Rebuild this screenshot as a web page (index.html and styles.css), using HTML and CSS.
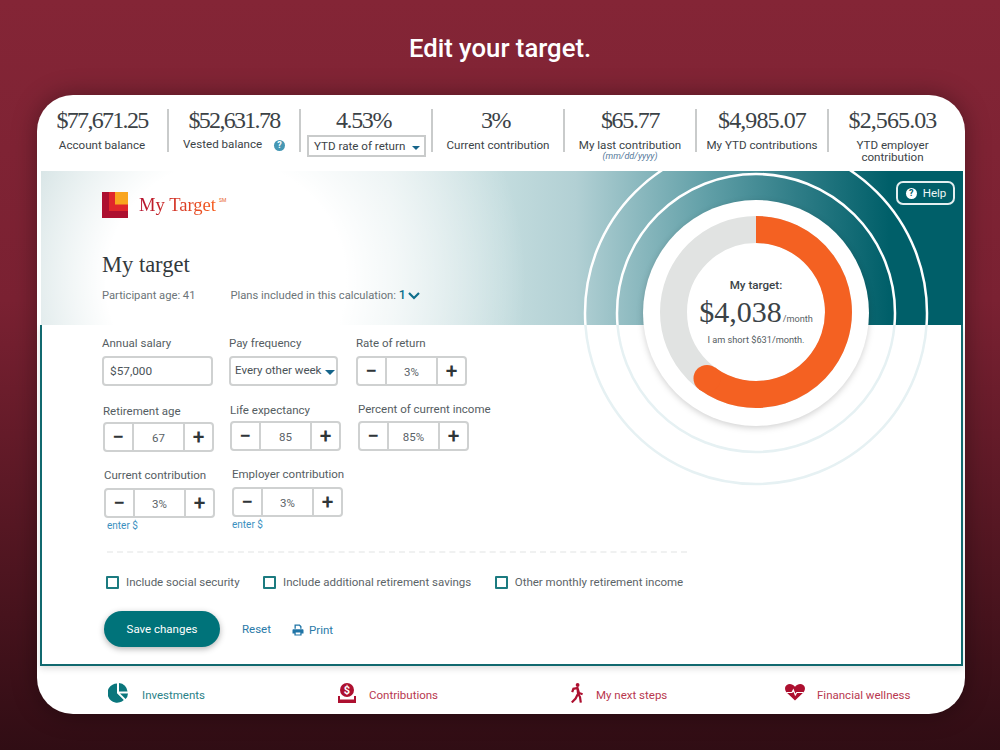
FILE: index.html
```html
<!DOCTYPE html>
<html>
<head>
    <meta charset="utf-8">
    <title>Edit your target</title>
    <link rel="stylesheet" href="styles.css">
</head>
<body>
    <h1 class="page-title">Edit your target.</h1>
    <div class="card">
        <div class="stats">
            <div class="stat">
                <div class="stat__value stat__value--tight">$77,671.25</div>
                <div class="stat__label">Account balance</div>
            </div>
            <div class="stat">
                <div class="stat__value stat__value--tight">$52,631.78</div>
                <div class="stat__label stat__label--help">Vested balance <span class="hint">?</span></div>
            </div>
            <div class="stat">
                <div class="stat__value stat__value--shift">4.53%</div>
                <div class="stat__select">YTD rate of return <span class="caret"></span></div>
            </div>
            <div class="stat">
                <div class="stat__value stat__value--shift">3%</div>
                <div class="stat__label">Current contribution</div>
            </div>
            <div class="stat">
                <div class="stat__value">$65.77</div>
                <div class="stat__label">My last contribution</div>
                <div class="stat__date">(mm/dd/yyyy)</div>
            </div>
            <div class="stat">
                <div class="stat__value stat__value--wide">$4,985.07</div>
                <div class="stat__label">My YTD contributions</div>
            </div>
            <div class="stat stat--last">
                <div class="stat__value stat__value--wide">$2,565.03</div>
                <div class="stat__label">YTD employer<br>contribution</div>
            </div>
        </div>

        <div class="main">
            <div class="hero">
                <div class="logo">
                    <svg class="logo__mark" viewBox="0 0 26 26" width="26" height="26">
                        <rect width="26" height="26" fill="#ad1030"/>
                        <rect x="7" width="19" height="19" fill="#e0262b"/>
                        <rect x="13" width="13" height="12.5" fill="#f9a51f"/>
                    </svg>
                    <span class="logo__name">My Target</span><span class="logo__sm">SM</span>
                </div>
                <h2 class="hero__title">My target</h2>
                <div class="hero__meta">
                    <span class="hero__age">Participant age: 41</span>
                    <span>Plans included in this calculation: <b class="hero__count">1</b></span>
                    <svg class="chevron" viewBox="0 0 14 9" width="14" height="9"><polyline points="2,2 7,7 12,2" fill="none" stroke="#0f6f8c" stroke-width="2.2"/></svg>
                </div>
                <div class="help"><span class="help__icon">?</span>Help</div>
            </div>

            <div class="form">
                <div class="form-row">
                    <div class="field">
                        <label class="field__label">Annual salary</label>
                        <div class="text-input">$57,000</div>
                    </div>
                    <div class="field field--select">
                        <label class="field__label">Pay frequency</label>
                        <div class="select">Every other week <span class="caret caret--big"></span></div>
                    </div>
                    <div class="field field--rate">
                        <label class="field__label">Rate of return</label>
                        <div class="stepper"><span class="stepper__btn">−</span><span class="stepper__val">3%</span><span class="stepper__btn">+</span></div>
                    </div>
                </div>
                <div class="form-row form-row--two">
                    <div class="field">
                        <label class="field__label field__label--low">Retirement age</label>
                        <div class="stepper"><span class="stepper__btn">−</span><span class="stepper__val">67</span><span class="stepper__btn">+</span></div>
                    </div>
                    <div class="field">
                        <label class="field__label">Life expectancy</label>
                        <div class="stepper"><span class="stepper__btn">−</span><span class="stepper__val">85</span><span class="stepper__btn">+</span></div>
                    </div>
                    <div class="field field--percent">
                        <label class="field__label field__label--high">Percent of current income</label>
                        <div class="stepper"><span class="stepper__btn">−</span><span class="stepper__val">85%</span><span class="stepper__btn">+</span></div>
                    </div>
                </div>
                <div class="form-row form-row--three">
                    <div class="field">
                        <label class="field__label">Current contribution</label>
                        <div class="stepper"><span class="stepper__btn">−</span><span class="stepper__val">3%</span><span class="stepper__btn">+</span></div>
                        <a class="enter enter--in">enter $</a>
                    </div>
                    <div class="field field--employer">
                        <label class="field__label">Employer contribution</label>
                        <div class="stepper"><span class="stepper__btn">−</span><span class="stepper__val">3%</span><span class="stepper__btn">+</span></div>
                        <a class="enter">enter $</a>
                    </div>
                </div>

                <div class="divider"></div>

                <div class="checks">
                    <label class="check"><span class="check__box"></span>Include social security</label>
                    <label class="check"><span class="check__box"></span>Include additional retirement savings</label>
                    <label class="check"><span class="check__box"></span>Other monthly retirement income</label>
                </div>

                <div class="actions">
                    <button class="save">Save changes</button>
                    <a class="action-link">Reset</a>
                    <a class="action-link action-link--print">
                        <svg viewBox="0 0 12 12" width="12" height="12"><path d="M2.5 0.5h5.2l1.8 1.8v2.4h-1.3V2.9L7.2 1.8H3.8v2.9H2.5zM1.5 5.2h9c.6 0 1 .4 1 1v3.3H9.6v2H2.4v-2H.5V6.2c0-.6.4-1 1-1zM3.7 8.4v2h4.6v-2z" fill="#1f74a6"/></svg>
                        Print
                    </a>
                </div>
            </div>

            <!-- rings and gauge lie over both the hero and the form -->
            <svg class="gauge" width="922" height="340" viewBox="0 0 922 340">
                <defs>
                    <clipPath id="topClip"><rect width="922" height="154"/></clipPath>
                    <clipPath id="bottomClip"><rect y="154" width="922" height="186"/></clipPath>
                </defs>
                <g clip-path="url(#bottomClip)" fill="none" stroke="#e6f1f3" stroke-width="2.5">
                    <circle cx="715" cy="142" r="139"/>
                    <circle cx="715" cy="142" r="171"/>
                </g>
                <g clip-path="url(#topClip)" fill="none" stroke="#fff" stroke-width="2.5">
                    <circle cx="715" cy="142" r="139"/>
                    <circle cx="715" cy="142" r="171"/>
                </g>
                <circle class="gauge__disc" cx="715" cy="142" r="113"/>
                <circle cx="715" cy="141" r="82.5" fill="none" stroke="#e1e3e2" stroke-width="27"/>
                <path d="M715 58.5 A82.5 82.5 0 1 1 666 207.4" fill="none" stroke="#f46122" stroke-width="27"/>
                <circle cx="666" cy="207.4" r="13.5" fill="#f46122"/>
            </svg>
            <div class="gauge-text">
                <div class="gauge-text__label">My target:</div>
                <div class="gauge-text__amount">$4,038<small>/month</small></div>
                <div class="gauge-text__note">I am short $631/month.</div>
            </div>
        </div>

        <div class="footer">
            <a class="nav nav--teal">
                <svg viewBox="0 0 20 20" width="20" height="20" fill="#0a767c">
                    <path d="M9 .5A9.6 9.6 0 1 0 15.8 17L9 10.2z"/>
                    <path d="M11 0A9 9 0 0 1 19.5 8.6H11z"/>
                    <path d="M12 10.5h8a9 9 0 0 1-2.4 5.6z"/>
                </svg>
                Investments
            </a>
            <a class="nav">
                <svg viewBox="0 0 20 20" width="20" height="20">
                    <circle cx="10" cy="7" r="7" fill="#ad1030"/>
                    <text x="10" y="10.8" class="nav__dollar">$</text>
                    <path d="M1 13h2v3.6h14V13h2v7H1z" fill="#ad1030"/>
                </svg>
                Contributions
            </a>
            <a class="nav">
                <svg viewBox="0 0 14 20" width="14" height="20">
                    <circle cx="7.6" cy="2" r="1.9" fill="#ad1030"/>
                    <path d="M2.2 9.2L3.4 5.8 7.5 5 9 10 12.6 11.2M7.5 5L8 10.5 10 14 10.8 19.6M7.6 11.5L5.6 15.5 1.8 19.4" fill="none" stroke="#ad1030" stroke-width="2.2"/>
                </svg>
                My next steps
            </a>
            <a class="nav">
                <svg viewBox="0 0 20 17" width="20" height="17">
                    <path d="M10 16.6L1.6 8.4C-.6 6-.4 2.6 1.8 1 4.2-.7 7.6-.1 10 2.8 12.4-.1 15.8-.7 18.2 1c2.2 1.6 2.4 5 .2 7.4z" fill="#ad1030"/>
                    <polyline points="1.5,8.5 7,8.5 8.3,6 10.3,11 11.8,8.5 18.5,8.5" fill="none" stroke="#fff" stroke-width="1.2"/>
                </svg>
                Financial wellness
            </a>
        </div>
    </div>
</body>
</html>
```

FILE: styles.css
```css
* {
	box-sizing: border-box;
}

body {
	margin: 0;
	width: 1000px;
	height: 750px;
	overflow: hidden;
	background: linear-gradient(to bottom, #842536 0%, #7a2132 40%, #561723 70%, #300d14 100%);
	font-family: Roboto, "Liberation Sans", sans-serif;
	font-size: 11.6px;
	color: #4a5257;
}

.page-title {
	margin: 0;
	height: 95px;
	padding-top: 33px;
	text-align: center;
	font-size: 25.7px;
	line-height: 30px;
	font-weight: 500;
	color: #fff;
}

.card {
	width: 928px;
	height: 619px;
	margin-left: 37px;
	background: #fff;
	border-radius: 36px;
	box-shadow: 0 0 24px rgba(0,0,0,0.35);
	overflow: hidden;
}

/* top stats */
.stats {
	display: flex;
	height: 76px;
	padding-top: 14px;
}
.stat {
	width: 132px;
	height: 43px;
	border-right: 2px solid #c9cbcb;
	text-align: center;
	color: #3b4347;
}
.stat--last {
	width: 127px;
	border-right: 0;
}
.stat__value {
	margin-top: -1px;
	margin-bottom: 1px;
	font-family: "Liberation Serif", serif;
	font-size: 24px;
	line-height: 24px;
	letter-spacing: -1.3px;
	color: #3b4246;
}
.stat__value--tight {
	letter-spacing: -1.7px;
}
.stat__value--wide {
	letter-spacing: -0.9px;
}
.stat__value--shift {
	letter-spacing: -1.4px;
	padding-right: 5px;
}
.stat__label {
	margin-top: 7px;
	line-height: 12px;
}
.stat__label--help {
	margin-top: 6px;
}
.stat__date {
	font-size: 9px;
	line-height: 11px;
	font-style: italic;
	color: #55789a;
}
.hint {
	display: inline-block;
	width: 11px;
	height: 11px;
	margin-left: 9px;
	border-radius: 50%;
	background: #4597b4;
	color: #fff;
	font-size: 9px;
	line-height: 11px;
	font-weight: 700;
}
.stat__select {
	width: 119px;
	height: 22px;
	margin: 3px 0 0 6px;
	border: 2px solid #c9cbcb;
	line-height: 18px;
	padding-left: 5px;
	text-align: left;
	color: #3b4347;
}
.caret {
	display: inline-block;
	margin-left: 4px;
	vertical-align: 0;
	border-left: 4px solid transparent;
	border-right: 4px solid transparent;
	border-top: 4px solid #15648a;
}
.caret--big {
	margin-left: 1px;
	vertical-align: -1px;
	border-left-width: 5px;
	border-right-width: 5px;
	border-top-width: 5px;
}

/* hero and form share this block, gauge sits over them */
.main {
	position: relative;
	margin: 0 2px 0 3px;
}

.hero {
	position: relative;
	height: 154px;
	margin-left: 1px;
	padding: 21px 0 0 61px;
	background:
		radial-gradient(ellipse 300px 300px at 185px 110px, #fff 40%, rgba(255,255,255,0) 100%),
		linear-gradient(to right, #b7cfd1 0%, #c4d9da 12%, #d2e3e4 25%, #d6e6e7 38%, #c3dcde 50%, #b2d0d4 58%, #8ab8be 65%, #62a0a8 72%, #2f7d87 82%, #005f69 92%, #005f69 100%);
}

.logo {
	display: flex;
	align-items: center;
	height: 26px;
}
.logo__mark {
	margin-right: 11px;
}
.logo__name {
	font-family: "Liberation Serif", serif;
	font-size: 18.6px;
	background: linear-gradient(to right, #b3102e, #f85f1e);
	-webkit-background-clip: text;
	background-clip: text;
	color: transparent;
}
.logo__sm {
	margin: -10px 0 0 3px;
	font-size: 5px;
	color: #e8602a;
}

.hero__title {
	margin: 33px 0 0;
	font-family: "Liberation Serif", serif;
	font-size: 22.5px;
	line-height: 28px;
	font-weight: 400;
	color: #33393c;
}
.hero__meta {
	display: flex;
	align-items: center;
	margin-top: 9px;
	font-size: 11.2px;
	line-height: 14px;
	color: #6c7478;
}
.hero__age {
	margin-right: 35px;
}
.hero__count {
	font-weight: 500;
	font-size: 12.5px;
	color: #0f6f8c;
}
.chevron {
	margin-left: 1px;
}

.help {
	position: absolute;
	top: 10px;
	right: 8px;
	display: flex;
	align-items: center;
	justify-content: center;
	width: 59px;
	height: 24px;
	padding-left: 1px;
	border: 2px solid #e4eff0;
	border-radius: 7px;
	color: #eef6f6;
}
.help__icon {
	width: 11px;
	height: 11px;
	margin-right: 6px;
	border-radius: 50%;
	background: #fff;
	color: #005f69;
	font-size: 9px;
	line-height: 11px;
	font-weight: 700;
	text-align: center;
}

.form {
	height: 341px;
	padding: 11px 0 0 60px;
	background: #fff;
	border: 2px solid #11696f;
	border-top: 0;
	box-shadow: 0 3px 6px rgba(0,0,0,0.12);
	font-size: 11.5px;
}
.form-row {
	display: flex;
	gap: 16px;
	height: 67px;
	color: #555d62;
}
.form-row--two {
	margin-left: 1px;
	height: 65px;
}
.form-row--three {
	margin-left: 2px;
	gap: 17px;
	height: 83px;
}
.field {
	width: 111px;
}
.field--select {
	width: 109px;
}
.field--rate {
	margin-left: 2px;
}
.field--percent {
	width: 140px;
	margin-left: 1px;
}
.field--employer {
	margin-top: -1px;
}
.field__label {
	display: block;
	height: 14px;
	line-height: 14px;
	margin-bottom: 6px;
	white-space: nowrap;
}
.form-row--two .field__label {
	margin-bottom: 4px;
}
.form-row--two .field__label--low {
	margin-top: 1px;
	margin-bottom: 4px;
}
.form-row--two .field__label--high {
	margin-top: -1px;
	margin-bottom: 5px;
}

.text-input {
	height: 30px;
	margin-top: 1px;
	border: 2px solid #cfd1d1;
	border-radius: 4px;
	padding-left: 6px;
	line-height: 27px;
	font-size: 11.8px;
	color: #4a5257;
}
.select {
	height: 30px;
	border: 2px solid #cfd1d1;
	border-radius: 4px;
	padding-left: 4px;
	line-height: 24px;
	white-space: nowrap;
	color: #4a5257;
}
.stepper {
	display: flex;
	width: 111px;
	height: 30px;
	border: 2px solid #cfd1d1;
	border-radius: 4px;
}
.stepper__btn {
	width: 27px;
	text-align: center;
	font-size: 21px;
	line-height: 26px;
	font-weight: 500;
	color: #2f3538;
}
.stepper__val {
	flex: 1;
	border-left: 2px solid #cfd1d1;
	border-right: 2px solid #cfd1d1;
	text-align: center;
	line-height: 28px;
	color: #5a6267;
}
.enter {
	display: block;
	margin-top: 1px;
	font-size: 10px;
	line-height: 14px;
	color: #3b8fc0;
}
.enter--in {
	margin-left: 3px;
}

.divider {
	width: 580px;
	margin-left: 5px;
	border-top: 2px dashed #f0f1f1;
}

.checks {
	display: flex;
	margin: 22px 0 0 4px;
}
.check {
	display: flex;
	align-items: center;
	height: 14px;
	margin-right: 23.5px;
	color: #5c6468;
	white-space: nowrap;
}
.check__box {
	width: 13px;
	height: 13px;
	margin-right: 7px;
	border: 2px solid #1c7b80;
	border-radius: 1px;
}

.actions {
	display: flex;
	align-items: center;
	margin: 22px 0 0 2px;
}
.save {
	width: 116px;
	height: 36px;
	border: 0;
	border-radius: 18px;
	background: #00737a;
	box-shadow: 0 2px 6px rgba(0,0,0,0.3);
	color: #fff;
	font-family: Roboto, sans-serif;
	font-size: 11.5px;
}
.action-link {
	display: flex;
	align-items: center;
	margin-left: 22px;
	color: #2a7aa8;
}
.action-link--print {
	margin: 2px 0 0 21px;
}
.action-link svg {
	margin-right: 5px;
}

/* gauge */
.gauge {
	position: absolute;
	top: 0;
	left: 1px;
}
.gauge__disc {
	fill: #fff;
	filter: drop-shadow(0 2px 3px rgba(0,0,0,0.18));
}
.gauge-text {
	position: absolute;
	top: 107px;
	left: 646px;
	width: 140px;
	text-align: center;
	color: #3b4347;
}
.gauge-text__label {
	font-weight: 500;
	line-height: 14px;
}
.gauge-text__amount {
	margin-top: 5px;
	font-family: "Liberation Serif", serif;
	font-size: 30px;
	line-height: 30px;
	white-space: nowrap;
}
.gauge-text__amount small {
	margin-left: 1px;
	font-family: Roboto, sans-serif;
	font-size: 9.2px;
	color: #5c6468;
}
.gauge-text__note {
	margin-top: -1px;
	font-size: 9.2px;
	line-height: 14px;
	color: #555d62;
}

/* bottom links */
.footer {
	display: grid;
	grid-template-columns: 229px 233px 215px auto;
	padding: 19px 0 0 71px;
	font-size: 11.5px;
}
.nav {
	display: flex;
	align-items: center;
	gap: 12px;
	height: 20px;
	color: #b8384f;
}
.nav svg {
	margin-top: -5px;
}
.nav--teal {
	gap: 14px;
	color: #2a8288;
}
.nav__dollar {
	fill: #fff;
	font-size: 11px;
	font-weight: 700;
	text-anchor: middle;
}
```
